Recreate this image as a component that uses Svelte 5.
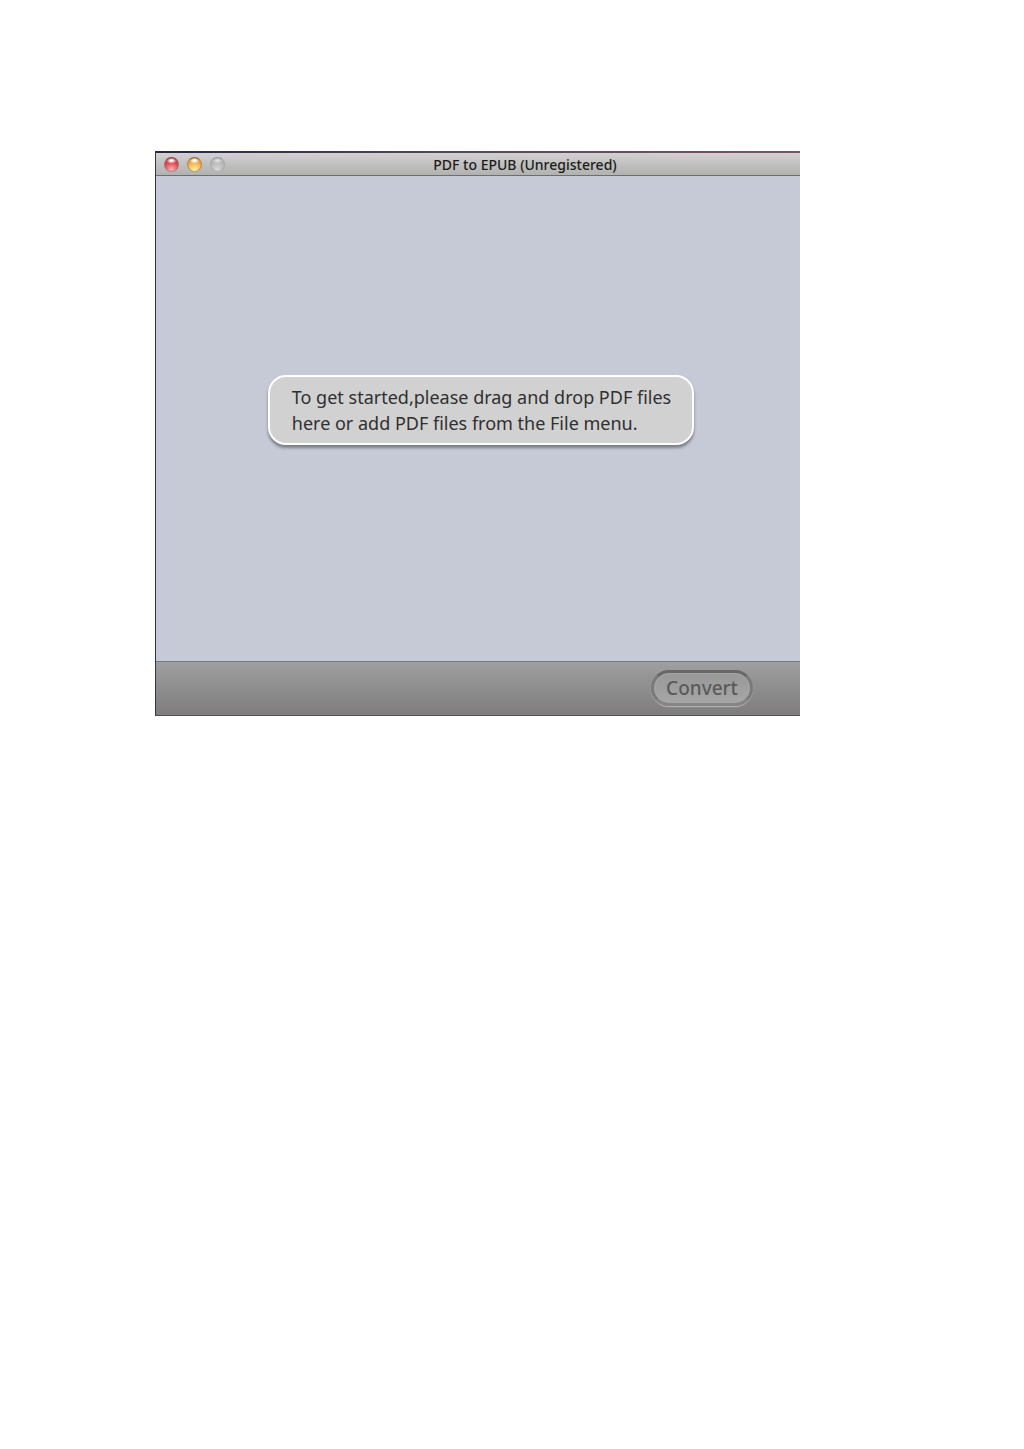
<script lang="ts">
  const title = 'PDF to EPUB (Unregistered)';
  const lights = [
    { name: 'close', label: 'Close window' },
    { name: 'minimize', label: 'Minimize window' },
    { name: 'zoom', label: 'Zoom window' },
  ];
</script>

<svelte:head><title>{title}</title></svelte:head>

<main>
  <section class="window">
    <header>
      <div class="lights">
        {#each lights as light}
          <button type="button" class="light {light.name}" aria-label={light.label}></button>
        {/each}
      </div>
      <h1>{title}</h1>
    </header>
    <div class="drop-area">
      <p>To get started,please drag and drop PDF files<br />here or add PDF files from the File menu.</p>
    </div>
    <footer>
      <button type="button" class="convert">Convert</button>
    </footer>
  </section>
</main>

<style>
  :global(body) {
    margin: 0;
    background: #fff;
  }
  main {
    padding: 151px 224px 151px 155px;
    font-family: 'Noto Sans', 'Open Sans', sans-serif;
  }
  .window {
    display: flex;
    flex-direction: column;
    box-sizing: border-box;
    min-height: 565px;
    border-left: 1px solid #33334d;
    border-bottom: 1px solid #514f5b;
    background: #c6cad6;
  }
  header {
    display: grid;
    grid-template-columns: 86px 1fr;
    align-items: center;
    box-sizing: border-box;
    height: 25px;
    border-top: 2px solid;
    border-image: linear-gradient(90deg, #25264a, #504a58 45%, #7d5070) 1;
    background: linear-gradient(#d2d0d1, #b0b0ae);
    box-shadow: inset 0 -1px #6c6e72;
  }
  .lights {
    display: flex;
    gap: 8px;
    padding-left: 8px;
  }
  .light {
    width: 15px;
    height: 15px;
    padding: 0;
    border: 1px solid;
    border-radius: 50%;
  }
  .close {
    border-color: #864748 #b26a6c #b58587;
    background: radial-gradient(ellipse 5px 3px at 50% 20%, #fff 20%, transparent),
      radial-gradient(circle at 50% 90%, #ffb8b5, #df5158 50%, #b5252f);
  }
  .minimize {
    border-color: #8b633c #b98a50 #bda178;
    background: radial-gradient(ellipse 5px 3px at 50% 20%, #fff 20%, transparent),
      radial-gradient(circle at 50% 90%, #fff3a5, #f3b75a 50%, #c67828);
  }
  .zoom {
    border-color: #999 #a8a8a8 #b0b0b0;
    background: radial-gradient(ellipse 5px 3px at 50% 20%, #ddd 20%, transparent),
      radial-gradient(circle at 50% 90%, #d8d8d8, #bcbcbc 50%, #a9a9a9);
  }
  h1 {
    margin: 0;
    padding-right: 76px;
    padding-left: 84px;
    color: #1c1c1c;
    font-size: 14px;
    font-weight: 500;
    line-height: 22px;
    text-align: center;
  }
  .drop-area {
    display: flex;
    flex: 1;
    align-items: center;
    justify-content: center;
    padding: 0 0 18px 6px;
  }
  p {
    margin: 0;
    padding: 7px 21px 7px 22px;
    border: 2px solid #fff;
    border-radius: 18px;
    background: #d1d1d1;
    box-shadow: 0 3px 3px #7c7f89;
    color: #303030;
    font-size: 18px;
    line-height: 26px;
  }
  footer {
    display: flex;
    align-items: center;
    justify-content: flex-end;
    box-sizing: border-box;
    height: 54px;
    padding: 0 47px 2px 0;
    border-top: 1px solid #777983;
    background: linear-gradient(#9f9f9f, #7e7c7d);
  }
  .convert {
    width: 102px;
    height: 36px;
    padding: 0;
    border: 3px solid;
    border-color: #686868 #7a7a7a #858585;
    border-radius: 18px;
    background: linear-gradient(#989898, #a6a6a6);
    box-shadow: 0 1px 1px #b9b9b9, inset 0 0 2px 1px #a8a8a8;
    color: #5a5a5a;
    font: 500 19px/26px 'Noto Sans', 'Open Sans', sans-serif;
  }
</style>
